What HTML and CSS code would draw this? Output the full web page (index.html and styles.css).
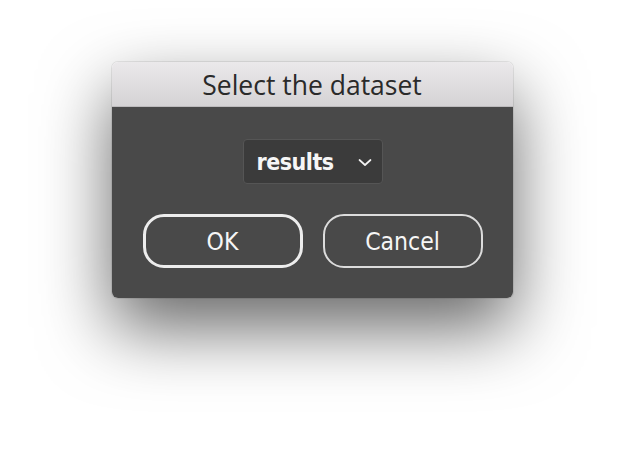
FILE: index.html
```html
<!DOCTYPE html>
<html lang="en">
<head>
    <meta charset="UTF-8">
    <title>Select the dataset</title>
    <link rel="stylesheet" href="styles.css">
</head>
<body>
    <div class="dialog">
        <div class="titlebar">Select the dataset</div>
        <div class="content">
            <div class="select">
                <span class="select-value">results</span>
                <svg class="chevron" width="14" height="9" viewBox="0 0 14 9">
                    <path d="M1.5 2 L7 7 L12.5 2" fill="none" stroke="#f2f2f2" stroke-width="1.7" stroke-linecap="round" stroke-linejoin="round"/>
                </svg>
            </div>
            <div class="buttons">
                <button class="btn btn-default">OK</button>
                <button class="btn">Cancel</button>
            </div>
        </div>
    </div>
</body>
</html>
```

FILE: styles.css
```css
html, body { height: 100%; }
body { margin: 0; padding-top: 62px; box-sizing: border-box; background: #fff; font-family: "DejaVu Sans Condensed", "DejaVu Sans", sans-serif; }
.dialog { width: 401px; margin: 0 auto; border-radius: 6px; overflow: hidden; box-shadow: 0 0 0 1px rgba(0,0,0,0.08), 0 30px 70px rgba(0,0,0,0.6); }
.titlebar { height: 44px; border-bottom: 1px solid #bdbbbd; background: linear-gradient(#ebe9eb, #d5d3d5); color: #2a2a2a; font-family: "Open Sans", sans-serif; font-size: 26.5px; line-height: 47px; text-align: center; }
.content { background: #494949; padding: 32px 30px 30px 31px; display: flex; flex-direction: column; align-items: center; gap: 30px; }
.select { width: 140px; height: 45px; box-sizing: border-box; border: 1px solid #555; border-radius: 4px; background: #3b3b3b; display: flex; align-items: center; justify-content: space-between; padding: 0 10px 0 13px; }
.select-value { color: #f6f6f6; font-weight: bold; font-size: 23px; letter-spacing: -0.5px; }
.chevron { margin-top: 2px; }
.buttons { display: flex; gap: 20px; }
.btn { width: 160px; height: 54px; box-sizing: border-box; border: 2px solid #dcdcdc; border-radius: 21px; background: transparent; color: #f6f6f6; font-family: "DejaVu Sans Condensed", "DejaVu Sans", sans-serif; font-size: 24.5px; padding: 0; }
.btn-default { border: 3px solid #ededed; }
```
